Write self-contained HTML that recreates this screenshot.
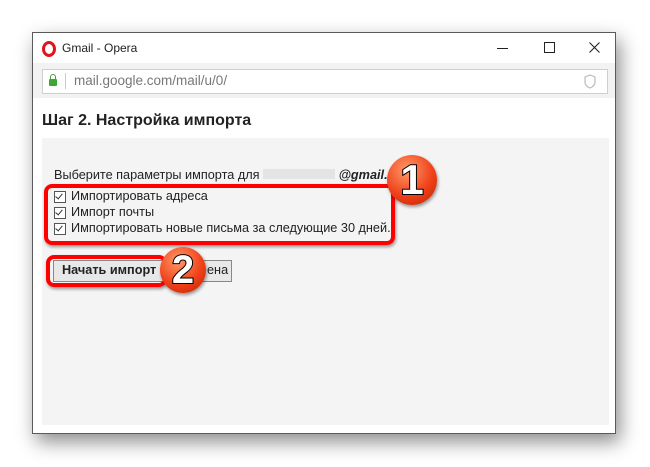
<!DOCTYPE html>
<html><head><meta charset="utf-8"><style>
body{margin:0;width:650px;height:467px;background:#fff;position:relative;overflow:hidden;font-family:"Liberation Sans",Arial,sans-serif}
.win{position:absolute;left:32px;top:32px;width:582px;height:400px;border:1px solid #5a5a5a;background:#fff;box-shadow:4px 8px 18px rgba(0,0,0,.45)}
.title{position:absolute;left:0;top:0;width:100%;height:30px;font-size:12px;color:#222}
.addr{position:absolute;left:0;top:30px;width:100%;height:35px;background:#f2f2f2}
.box{position:absolute;left:9px;top:6px;width:564px;height:23px;border:1px solid #cfcfcf;background:#fff}
.panel{position:absolute;left:9px;top:105px;width:567px;height:287px;background:#f4f4f4}
.t{position:absolute;font-size:12.7px;color:#222;white-space:nowrap}
.cb{position:absolute;width:10px;height:10px;border:1px solid #555;background:#fff}
.cb:after{content:"";position:absolute;left:2px;top:0;width:3px;height:6px;border:solid #333;border-width:0 1.5px 1.5px 0;transform:rotate(40deg)}
.red{position:absolute;border:4px solid #f00;border-radius:8px;box-shadow:1px 2px 3px rgba(0,0,0,.4)}
.circ{position:absolute;border-radius:50%;background:radial-gradient(circle at 40% 30%,#ff9a6a,#f0421a 55%,#c02000);box-shadow:1px 2px 3px rgba(0,0,0,.4);color:#fff;font-weight:bold;text-align:center;font-family:"Liberation Sans",sans-serif;-webkit-text-stroke:2px #000;paint-order:stroke fill}
</style></head><body>
<div class="win">
 <div class="title">
  <div style="position:absolute;left:9px;top:8px;height:10px;border:3px solid #e0141e;border-radius:50%/50%;width:8px"></div>
  <div style="position:absolute;left:29px;top:8px">Gmail - Opera</div>
  <div style="position:absolute;left:464px;top:15px;width:11px;height:1px;background:#222"></div>
  <div style="position:absolute;left:511px;top:9px;width:9px;height:9px;border:1px solid #222"></div>
  <svg style="position:absolute;left:556px;top:9px" width="11" height="11"><path d="M0.5 0.5L10.5 10.5M10.5 0.5L0.5 10.5" stroke="#222" stroke-width="1.1"/></svg>
 </div>
 <div class="addr"><div class="box">
  <div style="position:absolute;left:6px;top:9px;width:8px;height:7px;background:#3fa535;border-radius:1px"></div>
  <div style="position:absolute;left:7px;top:4px;width:4px;height:5px;border:1.5px solid #3fa535;border-bottom:0;border-radius:3px 3px 0 0"></div>
  <div style="position:absolute;left:22px;top:3px;width:1px;height:16px;background:#ccc"></div>
  <div style="position:absolute;left:31px;top:3px;font-size:13.5px;color:#777">mail.google.com/mail/u/0/</div>
  <svg style="position:absolute;left:541px;top:4px" width="12" height="15"><path d="M1 3 L6 1 L11 3 L11 8 Q11 12 6 14 Q1 12 1 8Z" fill="none" stroke="#bbb" stroke-width="1.2"/></svg>
 </div></div>
 <div class="t" style="left:9px;top:79px;font-size:16px;font-weight:bold">Шаг 2. Настройка импорта</div>
 <div class="panel"></div>
</div>
<div class="t" style="left:54px;top:168px">Выберите параметры импорта для <span style="display:inline-block;width:72px;height:10px;background:#e4e4e4"></span> <b><i>@gmail.</i></b></div>
<div class="cb" style="left:54px;top:191px"></div><div class="t" style="left:71px;top:189px">Импортировать адреса</div>
<div class="cb" style="left:54px;top:207px"></div><div class="t" style="left:71px;top:205px">Импорт почты</div>
<div class="cb" style="left:54px;top:223px"></div><div class="t" style="left:71px;top:221px">Импортировать новые письма за следующие 30 дней.</div>
<div style="position:absolute;left:53px;top:260px;width:177px;height:20px;border:1px solid #888;background:#e8e8e8"></div>
<div class="t" style="left:62px;top:263px;font-weight:bold">Начать импорт</div>
<div class="t" style="left:207px;top:263px">ена</div>
<div class="red" style="left:44px;top:184px;width:343px;height:53px"></div>
<div class="red" style="left:46px;top:255px;width:113px;height:24px"></div>
<div class="circ" style="left:387px;top:155px;width:50px;height:50px;font-size:42px;line-height:50px">1</div>
<div class="circ" style="left:160px;top:247px;width:46px;height:46px;font-size:40px;line-height:46px">2</div>
</body></html>
